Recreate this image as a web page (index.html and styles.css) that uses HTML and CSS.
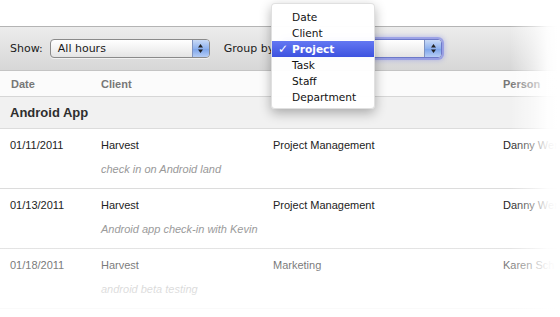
FILE: index.html
```html
<!DOCTYPE html>
<html>
<head>
<meta charset="utf-8">
<link rel="stylesheet" href="styles.css">
</head>
<body>
<div class="page">
  <div class="toolbar">
    <span class="tb-label">Show:</span>
    <div class="select select-show">
      <span class="select-value">All hours</span>
      <span class="stepper"><svg width="7" height="11" viewBox="0 0 7 11"><path d="M3.5 1 L6 4.5 L1 4.5 Z" fill="#222"/><path d="M3.5 10 L6 6.5 L1 6.5 Z" fill="#222"/></svg></span>
    </div>
    <span class="tb-label group-label">Group by:</span>
    <div class="select select-group focused">
      <span class="select-value"></span>
      <span class="stepper"><svg width="7" height="11" viewBox="0 0 7 11"><path d="M3.5 1 L6 4.5 L1 4.5 Z" fill="#222"/><path d="M3.5 10 L6 6.5 L1 6.5 Z" fill="#222"/></svg></span>
    </div>
  </div>

  <div class="table">
    <div class="thead grid">
      <span>Date</span><span>Client</span><span></span><span>Person</span>
    </div>
    <div class="group-row">Android App</div>
    <div class="row">
      <div class="grid">
        <span>01/11/2011</span><span>Harvest</span><span>Project Management</span><span>Danny Wen</span>
      </div>
      <div class="note">check in on Android land</div>
    </div>
    <div class="row">
      <div class="grid">
        <span>01/13/2011</span><span>Harvest</span><span>Project Management</span><span>Danny Wen</span>
      </div>
      <div class="note">Android app check-in with Kevin</div>
    </div>
    <div class="row">
      <div class="grid">
        <span>01/18/2011</span><span>Harvest</span><span>Marketing</span><span>Karen Sch</span>
      </div>
      <div class="note">android beta testing</div>
    </div>
  </div>

  <ul class="menu">
    <li>Date</li>
    <li>Client</li>
    <li class="active"><span class="check">✓</span>Project</li>
    <li>Task</li>
    <li>Staff</li>
    <li>Department</li>
  </ul>

  <div class="fade-right"></div>
  <div class="fade-bottom"></div>
</div>
</body>
</html>
```
FILE: styles.css
```css
* { box-sizing: border-box; }
html, body { margin: 0; padding: 0; background: #fff; }
.page {
  position: relative;
  width: 560px;
  height: 317px;
  overflow: hidden;
  padding-top: 26px;
  font-family: "Liberation Sans", Arial, sans-serif;
}
.toolbar {
  display: flex;
  align-items: center;
  height: 45px;
  padding-left: 10px;
  border-top: 1px solid #b4b4b4;
  border-bottom: 1px solid #c4c4c4;
  background: linear-gradient(#ececec, #d7d7d7);
  font-family: "DejaVu Sans", sans-serif;
  font-size: 11px;
  color: #1a1a1a;
}
.tb-label { white-space: nowrap; }
.group-label { margin-left: 14px; }
.select {
  display: flex;
  align-items: stretch;
  height: 19px;
  margin-left: 7px;
  border: 1px solid #8a8a8a;
  border-radius: 4px;
  background: linear-gradient(#ffffff, #f0f0f0 60%, #e4e4e4);
  box-shadow: 0 1px 0 rgba(255,255,255,0.6);
  overflow: hidden;
}
.select-show { width: 160px; }
.select-group { width: 159px; margin-left: 6px; }
.select-value {
  flex: 1;
  padding-left: 7px;
  line-height: 17px;
  font-size: 11px;
}
.stepper {
  width: 17px;
  display: flex;
  align-items: center;
  justify-content: center;
  border-left: 1px solid #7f93c0;
  background: linear-gradient(#c9daf6, #8fb2ee 50%, #7aa3ea 51%, #b6cdf5);
}
.focused {
  border-color: #6d79c8;
  box-shadow: 0 0 0 2px rgba(120,130,230,0.55), 0 0 4px 3px rgba(120,130,230,0.35);
}
.table { font-size: 11px; }
.grid {
  display: grid;
  grid-template-columns: 91px 172px 230px 1fr;
  padding-left: 10px;
  white-space: nowrap;
}
.thead {
  height: 26px;
  align-items: center;
  border-bottom: 1px solid #d6d6d6;
  background: #fbfbfb;
  font-weight: bold;
  color: #777;
}
.thead span:first-child { padding-left: 1px; }
.group-row {
  height: 32px;
  line-height: 31px;
  padding-left: 10px;
  background: #f1f1f1;
  border-bottom: 1px solid #dcdcdc;
  font-size: 13px;
  font-weight: bold;
  color: #2e2e2e;
}
.row {
  height: 60px;
  padding-top: 10px;
  border-bottom: 1px solid #dcdcdc;
  color: #222;
}
.row .grid { line-height: 13px; }
.note {
  margin-top: 11px;
  padding-left: 101px;
  line-height: 13px;
  font-style: italic;
  color: #999;
}
.menu {
  position: absolute;
  left: 271px;
  top: 3px;
  width: 104px;
  margin: 0;
  padding: 5px 0 3px;
  list-style: none;
  background: rgba(255,255,255,0.97);
  border: 1px solid rgba(0,0,0,0.12);
  border-radius: 4px;
  box-shadow: 0 4px 12px rgba(0,0,0,0.3);
  font-family: "DejaVu Sans", sans-serif;
  font-size: 10.6px;
  color: #111;
}
.menu li {
  position: relative;
  height: 16px;
  line-height: 16px;
  padding-left: 20px;
}
.menu li.active {
  background: linear-gradient(#6478f2, #3d52e0);
  color: #fff;
  font-weight: bold;
}
.check {
  position: absolute;
  left: 6px;
  top: 0;
  font-size: 12px;
}
.fade-right {
  position: absolute;
  top: 0;
  bottom: 0;
  left: 510px;
  width: 50px;
  background: linear-gradient(to right, rgba(255,255,255,0), rgba(255,255,255,0.5) 45%, rgba(255,255,255,0.92) 75%, #fff 95%);
  pointer-events: none;
}
.fade-bottom {
  position: absolute;
  left: 0;
  right: 0;
  top: 228px;
  bottom: 0;
  background: linear-gradient(rgba(255,255,255,0), rgba(255,255,255,0.95));
  pointer-events: none;
}
```
